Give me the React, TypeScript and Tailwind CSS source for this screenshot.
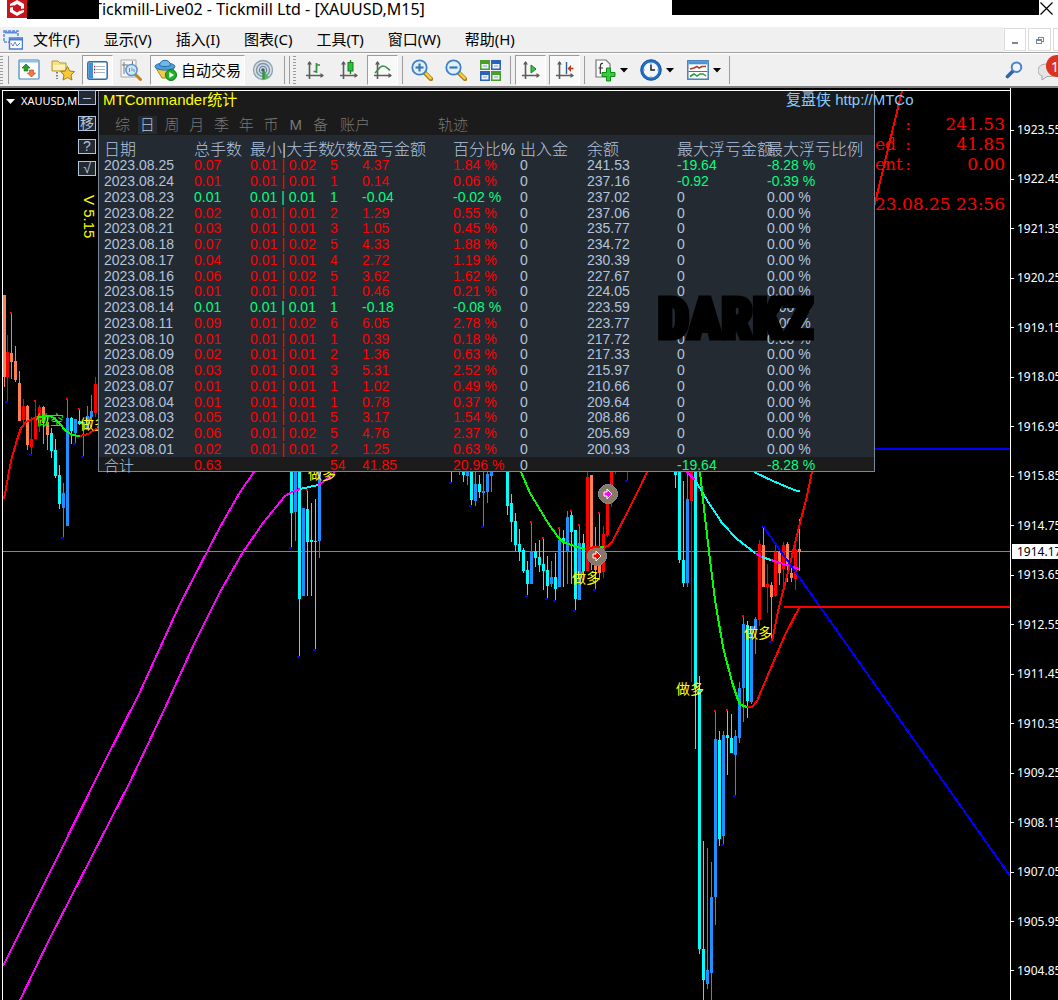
import React from 'react';
import clsx from 'clsx';

type Candle = [x: number, high: number, low: number, top: number, bottom: number, color: string];

const CORAL = '#ff7f50';
const RED = '#ff0000';
const BLUE = '#1e90ff';
const AQUA = '#00ffff';

const menus = ['文件(F)', '显示(V)', '插入(I)', '图表(C)', '工具(T)', '窗口(W)', '帮助(H)'];

const prices = [
  '1923.55', '1922.45', '1921.35', '1920.25', '1919.15', '1918.05', '1916.95', '1915.85', '1914.75',
  '1913.65', '1912.55', '1911.45', '1910.35', '1909.25', '1908.15', '1907.05', '1905.95', '1904.85',
];

const headers = ['日期', '总手数', '最小|大手数', '次数', '盈亏金额', '百分比%', '出入金', '余额', '最大浮亏金额', '最大浮亏比例'];
const colWidths = [
  'w-[90px]', 'w-[56px]', 'w-[80px]', 'w-[32px]', 'w-[91px]', 'w-[67px]', 'w-[67px]', 'w-[90px]', 'w-[90px]', 'w-auto',
];

// date, lots, max lot, count, profit, percent, balance
const days: string[][] = [
  ['2023.08.25', '0.07', '0.02', '5', '4.37', '1.84 %', '241.53'],
  ['2023.08.24', '0.01', '0.01', '1', '0.14', '0.06 %', '237.16'],
  ['2023.08.23', '0.01', '0.01', '1', '-0.04', '-0.02 %', '237.02'],
  ['2023.08.22', '0.02', '0.01', '2', '1.29', '0.55 %', '237.06'],
  ['2023.08.21', '0.03', '0.01', '3', '1.05', '0.45 %', '235.77'],
  ['2023.08.18', '0.07', '0.02', '5', '4.33', '1.88 %', '234.72'],
  ['2023.08.17', '0.04', '0.01', '4', '2.72', '1.19 %', '230.39'],
  ['2023.08.16', '0.06', '0.02', '5', '3.62', '1.62 %', '227.67'],
  ['2023.08.15', '0.01', '0.01', '1', '0.46', '0.21 %', '224.05'],
  ['2023.08.14', '0.01', '0.01', '1', '-0.18', '-0.08 %', '223.59'],
  ['2023.08.11', '0.09', '0.02', '6', '6.05', '2.78 %', '223.77'],
  ['2023.08.10', '0.01', '0.01', '1', '0.39', '0.18 %', '217.72'],
  ['2023.08.09', '0.02', '0.01', '2', '1.36', '0.63 %', '217.33'],
  ['2023.08.08', '0.03', '0.01', '3', '5.31', '2.52 %', '215.97'],
  ['2023.08.07', '0.01', '0.01', '1', '1.02', '0.49 %', '210.66'],
  ['2023.08.04', '0.01', '0.01', '1', '0.78', '0.37 %', '209.64'],
  ['2023.08.03', '0.05', '0.01', '5', '3.17', '1.54 %', '208.86'],
  ['2023.08.02', '0.06', '0.02', '5', '4.76', '2.37 %', '205.69'],
  ['2023.08.01', '0.02', '0.01', '2', '1.25', '0.63 %', '200.93'],
];
const drawdown: Record<string, [string, string]> = {
  '2023.08.25': ['-19.64', '-8.28 %'],
  '2023.08.24': ['-0.92', '-0.39 %'],
};

const candles: Candle[] = [
  [4, 295, 387, 295, 377, CORAL],
  [7, 335, 402, 352, 377, RED],
  [11, 312, 379, 353, 362, CORAL],
  [15, 346, 382, 361, 380, CORAL],
  [19, 371, 421, 383, 421, CORAL],
  [23, 399, 426, 406, 420, RED],
  [27, 405, 450, 406, 445, CORAL],
  [31, 417, 455, 439, 447, RED],
  [35, 400, 439, 418, 439, RED],
  [39, 405, 432, 407, 423, RED],
  [43, 406, 444, 407, 423, CORAL],
  [47, 416, 450, 422, 435, CORAL],
  [51, 428, 458, 433, 451, AQUA],
  [55, 439, 478, 450, 476, AQUA],
  [59, 465, 509, 475, 504, AQUA],
  [63, 483, 538, 493, 508, BLUE],
  [67, 398, 526, 418, 526, BLUE],
  [71, 417, 444, 418, 431, AQUA],
  [75, 419, 444, 419, 433, BLUE],
  [79, 408, 425, 421, 424, AQUA],
  [83, 422, 457, 422, 425, BLUE],
  [87, 406, 430, 416, 430, BLUE],
  [91, 395, 427, 411, 417, BLUE],
  [95, 377, 417, 384, 413, RED],
  [291, 460, 548, 460, 513, AQUA],
  [295, 460, 541, 460, 512, BLUE],
  [299, 460, 657, 460, 599, AQUA],
  [303, 508, 596, 508, 596, BLUE],
  [307, 489, 596, 509, 542, AQUA],
  [311, 503, 596, 540, 542, AQUA],
  [315, 499, 650, 541, 542, AQUA],
  [319, 460, 558, 460, 541, BLUE],
  [451, 460, 483, 460, 461, AQUA],
  [459, 460, 475, 460, 461, BLUE],
  [463, 460, 482, 460, 475, AQUA],
  [467, 460, 485, 460, 476, BLUE],
  [471, 460, 507, 460, 500, AQUA],
  [475, 460, 506, 484, 501, BLUE],
  [479, 475, 498, 484, 492, AQUA],
  [483, 460, 527, 491, 493, BLUE],
  [487, 460, 503, 474, 492, BLUE],
  [491, 460, 492, 460, 476, BLUE],
  [507, 460, 515, 460, 506, AQUA],
  [511, 494, 542, 503, 522, AQUA],
  [515, 513, 551, 521, 545, AQUA],
  [519, 529, 561, 544, 552, AQUA],
  [523, 548, 573, 550, 571, AQUA],
  [527, 561, 596, 570, 584, AQUA],
  [531, 521, 584, 551, 584, BLUE],
  [535, 543, 567, 551, 558, AQUA],
  [539, 540, 572, 557, 565, AQUA],
  [543, 537, 590, 564, 571, AQUA],
  [547, 556, 599, 570, 586, AQUA],
  [551, 561, 587, 577, 584, BLUE],
  [555, 553, 601, 577, 589, AQUA],
  [559, 527, 587, 540, 587, BLUE],
  [563, 530, 587, 538, 543, AQUA],
  [567, 511, 584, 517, 551, BLUE],
  [571, 510, 584, 515, 532, AQUA],
  [575, 530, 611, 530, 599, AQUA],
  [579, 524, 600, 543, 600, BLUE],
  [583, 534, 580, 543, 571, AQUA],
  [587, 460, 571, 477, 571, RED],
  [591, 475, 570, 475, 547, CORAL],
  [595, 527, 590, 552, 570, CORAL],
  [599, 512, 580, 550, 573, CORAL],
  [603, 526, 578, 534, 572, RED],
  [607, 492, 537, 494, 535, RED],
  [611, 460, 507, 460, 498, RED],
  [615, 460, 474, 460, 461, RED],
  [627, 460, 481, 460, 461, RED],
  [675, 460, 488, 460, 475, AQUA],
  [679, 460, 563, 460, 560, AQUA],
  [683, 481, 587, 560, 583, AQUA],
  [687, 460, 587, 499, 583, BLUE],
  [691, 460, 682, 460, 501, RED],
  [695, 460, 749, 460, 688, AQUA],
  [699, 676, 954, 690, 949, AQUA],
  [703, 841, 1001, 949, 980, AQUA],
  [707, 848, 989, 970, 984, BLUE],
  [711, 862, 1001, 897, 973, BLUE],
  [715, 710, 925, 739, 897, BLUE],
  [719, 731, 846, 740, 839, AQUA],
  [723, 731, 846, 735, 836, BLUE],
  [727, 709, 775, 735, 738, AQUA],
  [731, 714, 753, 738, 753, AQUA],
  [735, 730, 797, 736, 755, BLUE],
  [739, 682, 743, 688, 738, BLUE],
  [743, 615, 722, 624, 688, BLUE],
  [747, 621, 718, 625, 701, AQUA],
  [751, 626, 704, 626, 702, BLUE],
  [755, 617, 654, 619, 630, BLUE],
  [759, 540, 626, 544, 620, RED],
  [763, 527, 587, 545, 587, CORAL],
  [767, 564, 613, 584, 587, RED],
  [771, 582, 642, 585, 597, CORAL],
  [775, 545, 597, 552, 596, RED],
  [779, 550, 585, 552, 573, CORAL],
  [783, 542, 591, 545, 569, RED],
  [787, 542, 582, 544, 565, CORAL],
  [791, 565, 582, 573, 578, CORAL],
  [795, 545, 590, 550, 579, RED],
  [799, 519, 571, 549, 552, CORAL],
];

const highs = [[11, 312], [35, 400], [67, 398], [79, 408], [307, 489], [531, 521], [543, 537], [559, 527], [571, 510], [579, 524], [599, 512], [715, 710], [727, 709], [743, 615], [763, 526]];
const lows = [[7, 402], [31, 455], [63, 538], [75, 444], [83, 457], [291, 548], [299, 657], [315, 650], [451, 483], [471, 506], [483, 527], [527, 596], [547, 599], [555, 601], [575, 611], [595, 590], [627, 481], [723, 845], [735, 796], [771, 642], [783, 591]];

const curves: [string, string][] = [
  ['#ff0000', '4,499 8,477 12,457 17,440 21,428 26,422 32,419 37,417'],
  ['#00ff00', '37,417 50,416 54,418 60,424 65,430 72,435 80,436'],
  ['#ff0000', '80,436 88,434 98,428'],
  ['#ff00ff', '3,966 30,912 60,852 100,771 140,692 180,604 208,550 220,527 240,492 254,472'],
  ['#ff00ff', '20,1000 50,938 90,860 130,782 165,708 195,642 220,592 243,552 263,523 285,496 292,492 300,489'],
  ['#00ffff', '300,489 318,485'],
  ['#ff00ff', '318,485 326,480 335,472'],
  ['#00ff00', '521,472 530,493 548,523 558,537 563,542 577,547 585,549'],
  ['#ff0000', '585,549 595,547 600,547'],
  ['#00ff00', '600,547 604,547'],
  ['#ff0000', '604,547 608,546 612,542 627,513 640,487 647,472'],
  ['#ff00ff', '687,472 695,480'],
  ['#00ffff', '695,480 707,500 722,523 737,539 755,553'],
  ['#ff00ff', '755,553 762,557'],
  ['#00ffff', '762,557 771,560'],
  ['#ff00ff', '771,560 780,563 790,566 799,569'],
  ['#00ffff', '754,472 773,481 787,487 797,491 800,491'],
  ['#00ff00', '700,472 703,500 710,560 715,600 723,647 732,682 738,700 741,705 747,707'],
  ['#ff0000', '747,707 752,707 757,701 770,670 785,635 799,608'],
  ['#ff0000', '772,641 779,607 788,572 799,527 806,500 812,472 875,203 902,91'],
  ['#0000ff', '763,526 1010,876'],
];

const signals: [number, number, string, string][] = [
  [36, 425, '做空', '#00ff00'],
  [80, 429, '做多', '#ffff00'],
  [308, 479, '做多', '#ffff00'],
  [572, 583, '做多', '#ffff00'],
  [744, 638, '做多', '#ffff00'],
  [676, 694, '做多', '#ffff00'],
];

const TradeMark: React.FC<{ x: number; y: number; fill: string }> = ({ x, y, fill }) => (
  <g transform={`translate(${x} ${y})`}>
    <circle r="9.5" fill="#8b7765" stroke="#778899" />
    <path d="M-4 -2 H-1 V-5 L4 0 L-1 5 V2 H-4 Z" fill={fill} stroke="#fff" strokeWidth="1" shapeRendering="auto" />
  </g>
);

const PriceChart: React.FC = () => (
  <svg className="absolute inset-0 h-full w-full" shapeRendering="crispEdges" aria-hidden="true">
    <g transform="translate(0 -88)">
      <rect x="3" y="551" width="100%" height="1" fill="#778899" />
      {candles.map(([x, high, low, top, bottom, color]) => (
        <g key={x} fill={color}>
          <rect x={x} y={high} width="1" height={low - high} />
          <rect x={x - 1} y={top} width="3" height={bottom - top} />
        </g>
      ))}
      {highs.map(([x, y]) => <rect key={x} x={x - 1} y={y} width="2" height="2" fill="#ff0000" />)}
      {lows.map(([x, y]) => <rect key={x} x={x - 2} y={y - 1} width="3" height="2" fill="#0000ff" />)}
      <TradeMark x={608} y={494} fill="#ff00ff" />
      <TradeMark x={597} y={556} fill="#ff0000" />
      {curves.map(([color, points]) => (
        <polyline key={points} points={points} fill="none" stroke={color} strokeWidth="2" />
      ))}
      {signals.map(([x, y, text, color]) => (
        <text key={x} x={x} y={y} fill={color} fontSize="14" fontFamily="'Noto Sans CJK SC', sans-serif">
          {text}
        </text>
      ))}
      <rect x="784" y="606" width="100%" height="2" fill="#ff0000" />
      <rect x="875" y="448" width="100%" height="2" fill="#0000ff" />
      <rect x="2" y="90" width="100%" height="1" fill="#fff" />
      <rect x="2" y="90" width="1" height="100%" fill="#fff" />
    </g>
  </svg>
);

/* ---------- toolbar ---------- */

const Axes: React.FC<{ children?: React.ReactNode }> = ({ children }) => (
  <svg width="20" height="20" viewBox="0 0 20 20" fill="none">
    <path d="M4.5 2V19M1 15.5H18" stroke="#5c5c5c" strokeWidth="1.6" />
    <path d="M2 4.5L4.5 1L7 4.5ZM15.5 13L19 15.5L15.5 18Z" fill="#5c5c5c" />
    {children}
  </svg>
);

const Magnifier: React.FC<{ plus?: boolean }> = ({ plus }) => (
  <svg width="22" height="22" viewBox="0 0 22 22" fill="none">
    <path d="M13.5 13.5L20 20" stroke="#a87a10" strokeWidth="4.4" strokeLinecap="round" />
    <path d="M14 13.5L19.7 19.3" stroke="#f5cf4a" strokeWidth="2.4" strokeLinecap="round" />
    <circle cx="8.5" cy="8.5" r="7.2" fill="#dff0fb" stroke="#3f7fc4" strokeWidth="1.8" />
    <path d="M4.5 8.5H12.5" stroke="#3c78b4" strokeWidth="2.2" />
    {plus && <path d="M8.5 4.5V12.5" stroke="#3c78b4" strokeWidth="2.2" />}
  </svg>
);

const ToolButton: React.FC<{ label: string; active?: boolean; className: string; children: React.ReactNode }> = ({
  label,
  active,
  className,
  children,
}) => (
  <button
    type="button"
    aria-label={label}
    className={clsx(
      'flex h-[30px] shrink-0 items-center justify-center',
      active && 'border border-white border-t-[#9c9c9c] border-l-[#9c9c9c] bg-[#f8f8f8]',
      className,
    )}
  >
    {children}
  </button>
);

const Divider: React.FC<{ className: string }> = ({ className }) => (
  <span className={clsx('h-7 w-px shrink-0 bg-[#9c9c9c]', className)} />
);

const Grip: React.FC<{ className?: string }> = ({ className }) => (
  <span
    className={clsx(
      'h-7 w-[3px] shrink-0 bg-[repeating-linear-gradient(to_bottom,#9c9c9c_0_1px,#f0f0f0_1px_3px)]',
      className,
    )}
  />
);

const Caret = () => (
  <svg width="8" height="5" viewBox="0 0 8 5"><path d="M0 0H8L4 4.5Z" fill="#000" /></svg>
);

const Toolbar: React.FC = () => (
  <div className="flex h-[35px] items-center overflow-hidden border-t border-b-2 border-t-white border-b-[#808080] bg-[#f0f0f0]">
    <Grip />
    <Divider className="ml-[5px]" />
    <ToolButton label="新建图表" className="ml-[3px] w-[34px]">
      <svg width="22" height="22" viewBox="0 0 22 22">
        <rect x="1" y="1" width="20" height="19" rx="1" fill="#fff" stroke="#3f86c0" strokeWidth="1.2" />
        <rect x="1.5" y="1.5" width="19" height="2" fill="#8dc0e6" />
        <path d="M8 5L12 9H9.800V12H6.200V9H4Z" fill="#22a32a" stroke="#116b16" strokeWidth=".7" />
        <path d="M13.500 18L9.500 14H11.700V11H15.300V14H17.500Z" fill="#f08048" stroke="#b03a10" strokeWidth=".7" />
      </svg>
    </ToolButton>
    <ToolButton label="模板" className="w-[34px]">
      <svg width="24" height="22" viewBox="0 0 24 22">
        <path d="M1 2H7L9 4H15V12H1Z" fill="#f7e08a" stroke="#b8962c" />
        <path d="M2 6H14V11H2Z" fill="#fff3b8" />
        <path d="M6 13V20" stroke="#333" strokeWidth="1.2" strokeDasharray="1.500 1.500" />
        <path d="M16.500 7.500L18.700 12L23.500 12.600L20 16L20.900 21L16.500 18.600L12 21L13 16L9.500 12.600L14.300 12Z" fill="#f6c93c" stroke="#a67c14" />
      </svg>
    </ToolButton>
    <ToolButton label="市场报价" active className="ml-0.5 w-[31px]">
      <svg width="21" height="19" viewBox="0 0 21 19">
        <rect x=".8" y=".8" width="19.400" height="17.400" rx="2" fill="#fff" stroke="#2d6da8" strokeWidth="1.500" />
        <rect x="1.500" y="1.500" width="4.500" height="16" fill="#3f8fd6" />
        <path d="M9 5.500H18M9 8.500H18M9 11.500H18" stroke="#a5b4c4" />
        <path d="M7 5.500H8.200M7 11.500H8.200" stroke="#d02020" strokeWidth="1.300" />
        <path d="M7 8.500H8.200" stroke="#222" strokeWidth="1.300" />
      </svg>
    </ToolButton>
    <ToolButton label="数据窗口" className="ml-px w-[34px]">
      <svg width="22" height="22" viewBox="0 0 22 22" fill="none">
        <path d="M1 1H16V18H1Z" fill="#f6f6f6" stroke="#a8a8a8" />
        <path d="M4 3V15M12.500 2V6M2 6H8" stroke="#777" />
        <path d="M15 15L20.500 20.500" stroke="#b8881c" strokeWidth="3" strokeLinecap="round" />
        <circle cx="11.500" cy="11" r="5.600" fill="#cfe6f8" stroke="#5b93c8" strokeWidth="1.500" />
        <path d="M9.500 9V13M12 8.500V12M14 10V13" stroke="#5b93c8" />
      </svg>
    </ToolButton>
    <ToolButton label="自动交易" active className="ml-0.5 w-[95px] gap-1">
      <svg width="23" height="22" viewBox="0 0 23 22">
        <path d="M2 9H20L16 19H8Z" fill="#f2c94c" stroke="#b08a1c" />
        <ellipse cx="11" cy="7.500" rx="10" ry="3.600" fill="#4aa0dc" stroke="#2a6ea8" />
        <path d="M5.500 6.500C5.500 -.5 16.500 -.5 16.500 6.500C13 8 9 8 5.500 6.500Z" fill="#6fb9e8" stroke="#2a6ea8" />
        <circle cx="17" cy="16" r="5.500" fill="#22b02c" stroke="#11791a" />
        <path d="M15.300 13L20 16L15.300 19Z" fill="#fff" />
      </svg>
      <span className="text-[15px]">自动交易</span>
    </ToolButton>
    <ToolButton label="信号" className="ml-px w-[34px]">
      <svg width="22" height="22" viewBox="0 0 22 22" fill="none">
        <circle cx="11" cy="11" r="9.500" fill="#d9dfe4" stroke="#8ba0b0" strokeWidth="1.300" />
        <path d="M11 11L17 18C15.500 20 13 20.500 11 20.500Z" fill="#5fb868" />
        <circle cx="11" cy="11" r="6.500" stroke="#7894a8" strokeWidth="1.400" />
        <circle cx="11" cy="11" r="3.600" stroke="#6a889c" strokeWidth="1.300" />
        <circle cx="11" cy="11" r="1.800" fill="#3d5c72" />
        <path d="M11.500 12V20" stroke="#2c9a38" strokeWidth="2.400" />
      </svg>
    </ToolButton>
    <Divider className="ml-1" />
    <Divider className="ml-1" />
    <Grip className="ml-[3px]" />
    <ToolButton label="柱状图" className="ml-0.5 w-[34px]">
      <Axes><path d="M11.500 3V13M8.500 11.500H11.500M11.500 5H15" stroke="#2f8f3a" strokeWidth="1.700" /></Axes>
    </ToolButton>
    <ToolButton label="阴阳烛" className="w-[34px]">
      <Axes>
        <path d="M11.500 0V14" stroke="#157a1c" strokeWidth="1.300" />
        <rect x="9" y="2.500" width="5" height="8.500" fill="#26c43a" stroke="#157a1c" />
      </Axes>
    </ToolButton>
    <ToolButton label="折线图" active className="ml-px w-[31px]">
      <Axes><path d="M2 13C6 9 7 6 10 6C13 6 14 8 17 10.500" stroke="#3f8a46" strokeWidth="1.500" /></Axes>
    </ToolButton>
    <Divider className="ml-1" />
    <ToolButton label="放大" className="ml-0.5 w-[34px]"><Magnifier plus /></ToolButton>
    <ToolButton label="缩小" className="w-[34px]"><Magnifier /></ToolButton>
    <ToolButton label="平铺窗口" className="w-[34px]">
      <svg width="21" height="21" viewBox="0 0 21 21">
        <rect x="0" y="0" width="10" height="10" fill="#4a9e2c" />
        <rect x="11" y="0" width="10" height="10" fill="#2a62b8" />
        <rect x="0" y="11" width="10" height="10" fill="#2a62b8" />
        <rect x="11" y="11" width="10" height="10" fill="#4a9e2c" />
        <path d="M1.500 4H8.500V8.500H1.500ZM12.500 4H19.500V8.500H12.500ZM1.500 15H8.500V19.500H1.500ZM12.500 15H19.500V19.500H12.500Z" fill="#e8f2f8" />
        <path d="M3 6H7M14 6H18M3 17H7M14 17H18" stroke="#8aa8b8" />
      </svg>
    </ToolButton>
    <Divider className="ml-[3px]" />
    <ToolButton label="自动滚动" active className="ml-1 w-[31px]">
      <Axes><path d="M10 5L15 9L10 13Z" fill="#3cc850" stroke="#157a1c" /></Axes>
    </ToolButton>
    <ToolButton label="图表平移" active className="ml-[3px] w-[31px]">
      <Axes>
        <path d="M11.500 2V14" stroke="#2a6090" strokeWidth="1.400" />
        <path d="M18.500 8.500H14" stroke="#c03a18" strokeWidth="1.600" />
        <path d="M16 5L12.500 8.500L16 12Z" fill="#c03a18" />
      </Axes>
    </ToolButton>
    <Divider className="ml-1" />
    <ToolButton label="指标" className="ml-[9px] w-[34px] gap-1">
      <svg width="22" height="23" viewBox="0 0 22 23">
        <path d="M2 1H12L16 5V18H2Z" fill="#fafafa" stroke="#777" strokeWidth="1.200" />
        <path d="M9 4.500C6.500 4 6.500 6 6.300 8V15M4.500 9H9" fill="none" stroke="#333" strokeWidth="1.200" />
        <path d="M12.500 9H16.500V13.500H21V17.500H16.500V22H12.500V17.500H8V13.500H12.500Z" fill="#2fd03a" stroke="#128a1c" />
      </svg>
      <Caret />
    </ToolButton>
    <ToolButton label="周期" className="ml-3 w-[34px] gap-1">
      <svg width="22" height="22" viewBox="0 0 22 22">
        <circle cx="11" cy="11" r="9" fill="#f2f7fb" stroke="#1f6fc8" strokeWidth="3" />
        <circle cx="11" cy="11" r="10.300" fill="none" stroke="#164f94" strokeWidth=".8" />
        <path d="M11 5.500V11H15" fill="none" stroke="#222" strokeWidth="1.500" />
        <path d="M11 4V5M11 17V18M4 11H5M17 11H18" stroke="#8a9aaa" />
      </svg>
      <Caret />
    </ToolButton>
    <ToolButton label="模板" className="ml-[13px] w-[34px] gap-1">
      <svg width="22" height="20" viewBox="0 0 22 20" fill="none">
        <rect x=".8" y=".8" width="20.400" height="18.400" fill="#fff" stroke="#3a78b4" strokeWidth="1.400" />
        <path d="M1.500 2.800H20.500" stroke="#4a94d4" strokeWidth="3" />
        <path d="M1.500 11.500H20.500" stroke="#3a78b4" />
        <path d="M3 9L7 8L10 6.500L12 8L15 6.500L19 6.500" stroke="#b03a20" strokeWidth="1.500" />
        <path d="M3 16.500L7 14L10 16L13 14L16 14L19 16" stroke="#2c9a38" strokeWidth="1.500" />
      </svg>
      <Caret />
    </ToolButton>
    <Divider className="ml-2" />
    <button type="button" aria-label="搜索" className="mr-[15px] ml-auto shrink-0">
      <svg width="18" height="18" viewBox="0 0 18 18" fill="none">
        <path d="M8 10L2.500 15.500" stroke="#2f62b0" strokeWidth="3.600" strokeLinecap="round" />
        <circle cx="11.500" cy="6.200" r="4.800" fill="#eef4fb" stroke="#4c7fcc" strokeWidth="2" />
      </svg>
    </button>
    <button type="button" aria-label="消息" className="relative h-[30px] w-[20px] shrink-0">
      <svg className="absolute top-2 left-0" width="24" height="18" viewBox="0 0 24 18">
        <path d="M9 1C3 1 0 4 0 7.500C0 10 1.500 12 4 13L4 17L9 13.500C16 14 20 12 20 7.500Z" fill="#e4e4e4" stroke="#a4a4a4" />
      </svg>
      <span className="absolute top-0 left-2 flex size-[22px] items-center rounded-full bg-[#dc3220] pl-[5px] text-[14px] text-white">1</span>
    </button>
  </div>
);

/* ---------- statistics panel ---------- */

const StatsPanel: React.FC = () => (
  <section className="absolute top-[3px] left-[98px] w-[777px] border border-t-0 border-[#778899] bg-[#242a32] font-['Liberation_Sans','Noto_Sans_CJK_SC',sans-serif] text-[#b0c4de]">
    <div className="h-[44px] bg-[#1b1b1b]">
      <div className="flex h-[19px] items-center pl-1 text-[15px] whitespace-nowrap">
        <h1 className="w-[683px] shrink-0 text-[#ffff00]">MTCommander统计</h1>
        <a href="#mtc" className="shrink-0 text-[#87cefa]">复盘侠 http://MTCo</a>
      </div>
      <div className="flex h-[25px] items-center pt-1 pl-3.5 text-[15px] leading-[17px] font-light text-[#787878]">
        <div className="flex w-[217px] justify-between">
          {['综', '日', '周', '月', '季', '年', '币', 'M', '备'].map((tab) => (
            <button
              key={tab}
              type="button"
              className={clsx('h-[18px] w-[19px] text-center', tab === '日' && 'bg-[#242a32] text-[#b0c4de]')}
            >
              {tab}
            </button>
          ))}
        </div>
        <button type="button" className="ml-2.5">账户</button>
        <button type="button" className="ml-[68px]">轨迹</button>
      </div>
    </div>
    <table className="w-full table-fixed text-left text-[14px] leading-[15px] whitespace-nowrap">
      <colgroup>
        <col className="w-[5px]" />
        {colWidths.map((w, i) => <col key={i} className={w} />)}
      </colgroup>
      <thead>
        <tr className="h-[23px] text-[16px] leading-[17px]">
          <td className="p-0" />
          {headers.map((h) => <th key={h} className="p-0 pt-1.5 font-light">{h}</th>)}
        </tr>
      </thead>
      <tbody>
        {days.map(([date, lots, max, count, profit, percent, balance], i) => {
          const color = profit.startsWith('-') ? 'text-[#00ff7f]' : 'text-[#ff0000]';
          const dd = drawdown[date];
          return (
            <tr key={date} className={i % 4 === 0 ? 'h-[15px]' : 'h-4'}>
              <td className="p-0" />
              <td className="p-0">{date}</td>
              <td className={clsx('p-0', color)}>{lots}</td>
              <td className={clsx('p-0', color)}>0.01 | {max}</td>
              <td className={clsx('p-0', color)}>{count}</td>
              <td className={clsx('p-0', color)}>{profit}</td>
              <td className={clsx('p-0', color)}>{percent}</td>
              <td className="p-0">0</td>
              <td className="p-0">{balance}</td>
              <td className={clsx('p-0', dd && 'text-[#00ff7f]')}>{dd ? dd[0] : '0'}</td>
              <td className={clsx('p-0', dd && 'text-[#00ff7f]')}>{dd ? dd[1] : '0.00 %'}</td>
            </tr>
          );
        })}
      </tbody>
      <tfoot>
        <tr className="h-[14px] bg-[#1b1b1b] leading-[11px] text-[#ff0000]">
          <td className="p-0" />
          <td className="p-0 pt-[3px] text-[15px] font-light text-[#b0c4de]">合计</td>
          <td className="p-0 pt-[3px]">0.63</td>
          <td className="p-0 pt-[3px]" />
          <td className="p-0 pt-[3px]">54</td>
          <td className="p-0 pt-[3px]">41.85</td>
          <td className="p-0 pt-[3px]">20.96 %</td>
          <td className="p-0 pt-[3px] text-[#b0c4de]">0</td>
          <td className="p-0 pt-[3px]" />
          <td className="p-0 pt-[3px] text-[#00ff7f]">-19.64</td>
          <td className="p-0 pt-[3px] text-[#00ff7f]">-8.28 %</td>
        </tr>
      </tfoot>
    </table>
    <svg className="absolute top-0 left-[703px]" width="12" height="6" viewBox="0 0 12 6">
      <path d="M0 0H12L6 6Z" fill="#778899" />
    </svg>
    <p className="absolute top-[196px] left-[559px] font-['Roboto_Condensed','Open_Sans_Condensed','Roboto',sans-serif] text-[55px] leading-[64px] font-black text-black [-webkit-text-stroke:5px_black]">
      DARKZ
    </p>
  </section>
);

const AccountInfo: React.FC = () => (
  <div className="absolute top-[26px] right-[5px] flex w-[130px] flex-col font-['DejaVu_Serif',serif] text-[17px] leading-5 text-[#ff0000]">
    {[['', '241.53'], ['ed', '41.85'], ['ent', '0.00']].map(([label, value]) => (
      <div key={value} className="flex justify-between">
        <span className="flex w-9 shrink-0 justify-between"><span>{label}</span><span>:</span></span>
        <span>{value}</span>
      </div>
    ))}
    <div className="flex justify-end pt-5 whitespace-nowrap">2023.08.25 23:56</div>
  </div>
);

const SideButtons: React.FC = () => (
  <div className="absolute top-[2px] left-[78px] flex w-[18px] flex-col items-end font-['Liberation_Sans','Noto_Sans_CJK_SC',sans-serif] text-[14px] leading-[13px] text-[#b0c4de]">
    <button type="button" className="h-[15px] w-full overflow-hidden border border-[#b0c4de] bg-[#242a32] leading-[11px]">–</button>
    <button type="button" className="mt-[11px] h-[15px] w-full border border-[#b0c4de] bg-[#242a32]">移</button>
    <button type="button" className="mt-2 h-[15px] w-full border border-[#b0c4de] bg-[#242a32]">?</button>
    <button type="button" className="mt-[7px] h-[15px] w-full border border-[#b0c4de] bg-[#242a32]">√</button>
    <span className="mt-[19px] text-[15px] text-[#ffff00] [writing-mode:vertical-rl]">V 5.15</span>
  </div>
);

const App: React.FC = () => (
  <div className="flex min-h-screen w-full flex-col overflow-hidden bg-black font-['Noto_Sans','Noto_Sans_CJK_SC',sans-serif] text-black">
    <header className="flex h-[27px] items-start overflow-hidden bg-white">
      <svg className="ml-[7px] shrink-0" width="20" height="18" viewBox="0 0 20 18">
        <rect width="20" height="18" fill="#c8141c" />
        <path d="M10 0L17 4V12L10 16L3 12V4Z" fill="#fff" />
        <path d="M10 4L14 6.500V10L10 12.500L6 10V6.500Z" fill="#c8141c" />
        <path d="M2 7L7 6M13 10L18 9" stroke="#c8141c" strokeWidth="1.500" />
      </svg>
      <span className="z-10 h-[19px] w-[72px] shrink-0 bg-black" />
      <h1 className="-ml-1.5 text-[16px] leading-[18px] whitespace-nowrap">Tickmill-Live02 - Tickmill Ltd - [XAUUSD,M15]</h1>
      <span className="ml-auto h-[15px] w-[367px] shrink-0 bg-black" />
      <button type="button" aria-label="关闭" className="mt-0.5 mr-[5px] ml-px shrink-0">
        <svg width="13" height="13" viewBox="0 0 13 13"><path d="M.5 .5L12.500 12.500M12.500 .5L.5 12.500" stroke="#000" strokeWidth="1.200" /></svg>
      </button>
    </header>

    <nav className="flex h-[26px] items-center overflow-hidden border-b border-[#a0a0a0] bg-[#f0f0f0] pl-[3px] text-[15px]">
      <svg width="20" height="20" viewBox="0 0 20 20" fill="none">
        <path d="M1 1H15V12H1Z" fill="#e8f0fc" stroke="#5c88d8" strokeWidth="1.500" strokeDasharray="3 1" />
        <path d="M2 2.500H14" stroke="#5c88d8" strokeWidth="2" />
        <rect x="6.500" y="8" width="13" height="11" fill="#fff" stroke="#4c7cd0" strokeWidth="1.500" />
        <path d="M7 9.500H19" stroke="#4c7cd0" strokeWidth="2" />
        <path d="M8 13L10 16L12 12L14 16L17 13" stroke="#5c88d8" />
      </svg>
      <ul className="ml-2.5 flex gap-6 whitespace-nowrap">
        {menus.map((m) => <li key={m}><button type="button">{m}</button></li>)}
      </ul>
      <div className="ml-auto flex h-full shrink-0 gap-0.5 bg-white pt-px">
        <button type="button" aria-label="最小化" className="flex h-[23px] w-[22px] items-center justify-center border border-[#dcdcdc] bg-white">
          <span className="mt-1.5 h-0.5 w-1.5 bg-[#788898]" />
        </button>
        <button type="button" aria-label="还原" className="flex h-[23px] w-[23px] items-center justify-center border border-[#dcdcdc] bg-white">
          <svg width="8" height="8" viewBox="0 0 8 8" fill="none" shapeRendering="crispEdges">
            <path d="M2 1H8M7.500 1V5.500H6M2.500 2V3" stroke="#788898" strokeWidth="1" />
            <path d="M.5 3.500H5.500V7.500H.5Z M0 4H6" stroke="#788898" />
          </svg>
        </button>
        <button type="button" aria-label="关闭图表" className="h-[23px] w-[5px] border border-r-0 border-[#dcdcdc] bg-white" />
      </div>
    </nav>

    <Toolbar />

    <main className="flex min-h-[912px] flex-1">
      <div className="relative flex-1 overflow-hidden border-r border-white">
        <PriceChart />
        <div className="absolute top-1 left-[6px] flex items-center gap-1 text-[11px] leading-[18px] text-white">
          <svg width="9" height="5" viewBox="0 0 9 5"><path d="M0 0H9L4.500 5Z" fill="#fff" /></svg>
          <span className="ml-0.5">XAUUSD,M15</span>
        </div>
        <AccountInfo />
        <SideButtons />
        <StatsPanel />
      </div>
      <div className="relative flex w-[47px] shrink-0 flex-col justify-between overflow-hidden pt-[34px] pb-[21px] text-[12px] leading-4 text-white">
        {prices.map((p) => (
          <div key={p} className="flex items-center gap-[3px]">
            <span className="h-px w-[3px] shrink-0 bg-white" />
            <span>{p}</span>
          </div>
        ))}
        <div className="absolute top-[456px] left-px h-[15px] bg-white pl-[5px] leading-[15px] text-black">1914.17</div>
      </div>
    </main>
  </div>
);

export default App;
